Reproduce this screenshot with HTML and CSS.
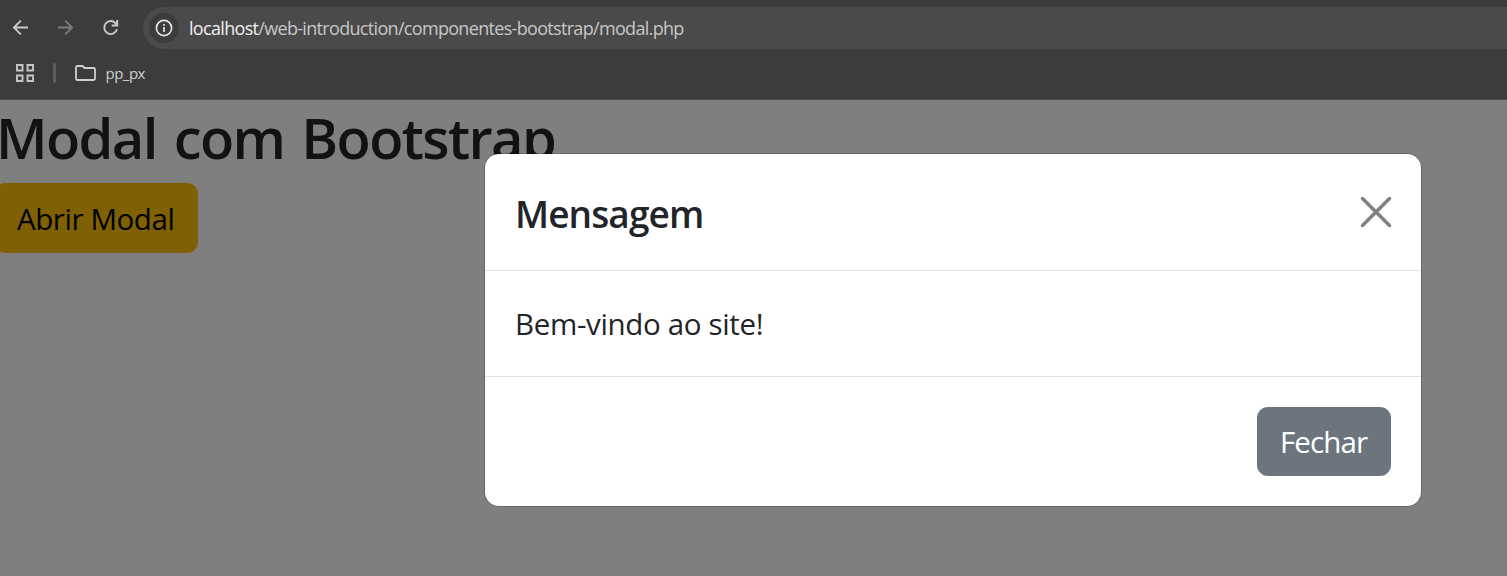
FILE: index.html
```html
<!DOCTYPE html>
<html lang="pt-br">
<head>
<meta charset="utf-8">
<title>Modal com Bootstrap</title>
<link rel="stylesheet" href="styles.css">
</head>
<body>
<header class="browser">
  <div class="toolbar">
    <svg class="nav-icon" viewBox="0 0 20 20"><path d="M17 9.500H3M9.800 2.700L3 9.500l6.800 6.800"/></svg>
    <svg class="nav-icon nav-off" viewBox="0 0 20 20"><path d="M2 9.500h14M9.200 2.700l6.800 6.800-6.800 6.800"/></svg>
    <svg class="nav-icon" viewBox="0 0 20 20"><path d="M16 11.200a6.500 6.500 0 1 1-1.600-6.200l1.700 1.800M16.200 2v5.500h-5.500"/></svg>
    <div class="omnibox">
      <span class="info"><svg viewBox="0 0 18 18"><circle cx="9" cy="9" r="7.600"/><path d="M9 8v5M9 5v1.800"/></svg></span>
      <span class="url"><span class="host">localhost</span>/web-introduction/componentes-bootstrap/modal.php</span>
    </div>
  </div>
  <div class="bookmarks">
    <svg class="grid-icon" viewBox="0 0 18 18"><path d="M1 1h5.500v5.500H1zM11.500 1H17v5.500h-5.500zM1 11.500h5.500V17H1zM11.500 11.500H17V17h-5.500z"/></svg>
    <span class="divider"></span>
    <svg class="folder-icon" viewBox="0 0 21 16"><path d="M1 2.500Q1 1 2.500 1H7.500L9.500 3H18.500Q20 3 20 4.500V13.500Q20 15 18.500 15H2.500Q1 15 1 13.500Z"/></svg>
    <span class="bookmark">pp_px</span>
  </div>
</header>
<main class="page">
  <h1 class="title">Modal com Bootstrap</h1>
  <button class="btn btn-warning"><span class="open-label">Abrir Modal</span></button>
  <div class="backdrop"></div>
  <section class="modal" role="dialog">
    <div class="modal-header">
      <h2 class="modal-title">Mensagem</h2>
      <svg class="close" viewBox="0 0 30 30"><path d="M1.500 1.500l27 27M28.500 1.500l-27 27"/></svg>
    </div>
    <div class="modal-body">Bem-vindo ao site!</div>
    <div class="modal-footer"><button class="btn btn-secondary"><span class="close-label">Fechar</span></button></div>
  </section>
</main>
</body>
</html>
```
FILE: styles.css
```css
* { box-sizing: border-box; }
body { margin: 0; height: 576px; overflow: hidden; display: flex; flex-direction: column; font-family: "Segoe UI", "Open Sans", "Noto Sans", sans-serif; color: #212529; background: #fff; }
svg { display: block; fill: none; flex: none; overflow: visible; }
.browser { height: 100px; flex: none; background: #3c3c3c; border-bottom: 1px solid #4a4a4a; padding-top: 7px; }
.toolbar { height: 42px; display: flex; align-items: center; padding-left: 11px; }
.nav-icon { width: 20px; height: 20px; margin-right: 25px; stroke: #c9c9c9; stroke-width: 1.900; }
.nav-off { stroke: #7c7c7c; }
.omnibox { flex: 1; height: 42px; margin-left: -3px; padding-left: 6px; display: flex; align-items: center; background: #4a4a4a; border-radius: 21px 0 0 21px; }
.info { width: 30px; height: 30px; border-radius: 50%; background: #3c3c3c; display: flex; align-items: center; justify-content: center; }
.info svg { width: 18px; height: 18px; stroke: #e3e3e3; stroke-width: 1.700; }
.url { margin-left: 10px; font-size: 18px; line-height: 24px; letter-spacing: -0.680px; color: #c7c7c7; white-space: nowrap; }
.host { color: #f0f0f0; }
.bookmarks { height: 50px; display: flex; align-items: center; padding: 0 0 2px 16px; }
.grid-icon { width: 18px; height: 18px; stroke: #c7c7c7; stroke-width: 1.900; }
.divider { width: 3px; height: 20px; margin-left: 19px; border-radius: 2px; background: #5e5e5e; }
.folder-icon { width: 21px; height: 16px; margin-left: 19px; stroke: #d0d0d0; stroke-width: 1.800; }
.bookmark { margin-left: 9.500px; font-size: 15px; line-height: 20px; letter-spacing: -0.500px; color: #d0d0d0; }
.page { flex: 1; position: relative; overflow: hidden; }
.title { margin: 3px 0 12px -4px; font-size: 56px; line-height: 68px; font-weight: 600; letter-spacing: -1.600px; word-spacing: 4px; white-space: nowrap; }
.btn { display: flex; align-items: center; justify-content: center; border: 0; border-radius: 11px; font: inherit; font-size: 29.500px; line-height: 45px; white-space: nowrap; }
.btn-warning { width: 204px; height: 70px; margin-left: -6px; padding: 1px 0 0 23px; justify-content: flex-start; background: #ffc107; color: #000; letter-spacing: -0.420px; }
.backdrop { position: absolute; inset: 0; background: rgba(0, 0, 0, 0.5); }
.modal { position: absolute; left: 485px; top: 54px; width: 936px; height: 352px; border-radius: 14px; background: #fff; box-shadow: 0 0 0 1px rgba(0, 0, 0, 0.18); }
.modal-header { height: 117px; display: flex; align-items: center; justify-content: space-between; padding: 0 30px 0 30px; border-bottom: 1px solid #dee2e6; }
.modal-title { margin: 3px 0 0; font-size: 37px; line-height: 56px; font-weight: 600; letter-spacing: -0.900px; }
.close { width: 30px; height: 30px; stroke: #808080; stroke-width: 3.500; stroke-linecap: round; }
.modal-body { height: 105px; padding: 30px; font-size: 29.500px; line-height: 45px; letter-spacing: -0.340px; white-space: nowrap; }
.modal-footer { height: 130px; padding: 30px; display: flex; justify-content: flex-end; border-top: 1px solid #dee2e6; }
.btn-secondary { width: 134px; height: 69px; padding: 0 0 1px 23px; justify-content: flex-start; background: #6c757d; color: #fff; letter-spacing: -0.900px; }
```
